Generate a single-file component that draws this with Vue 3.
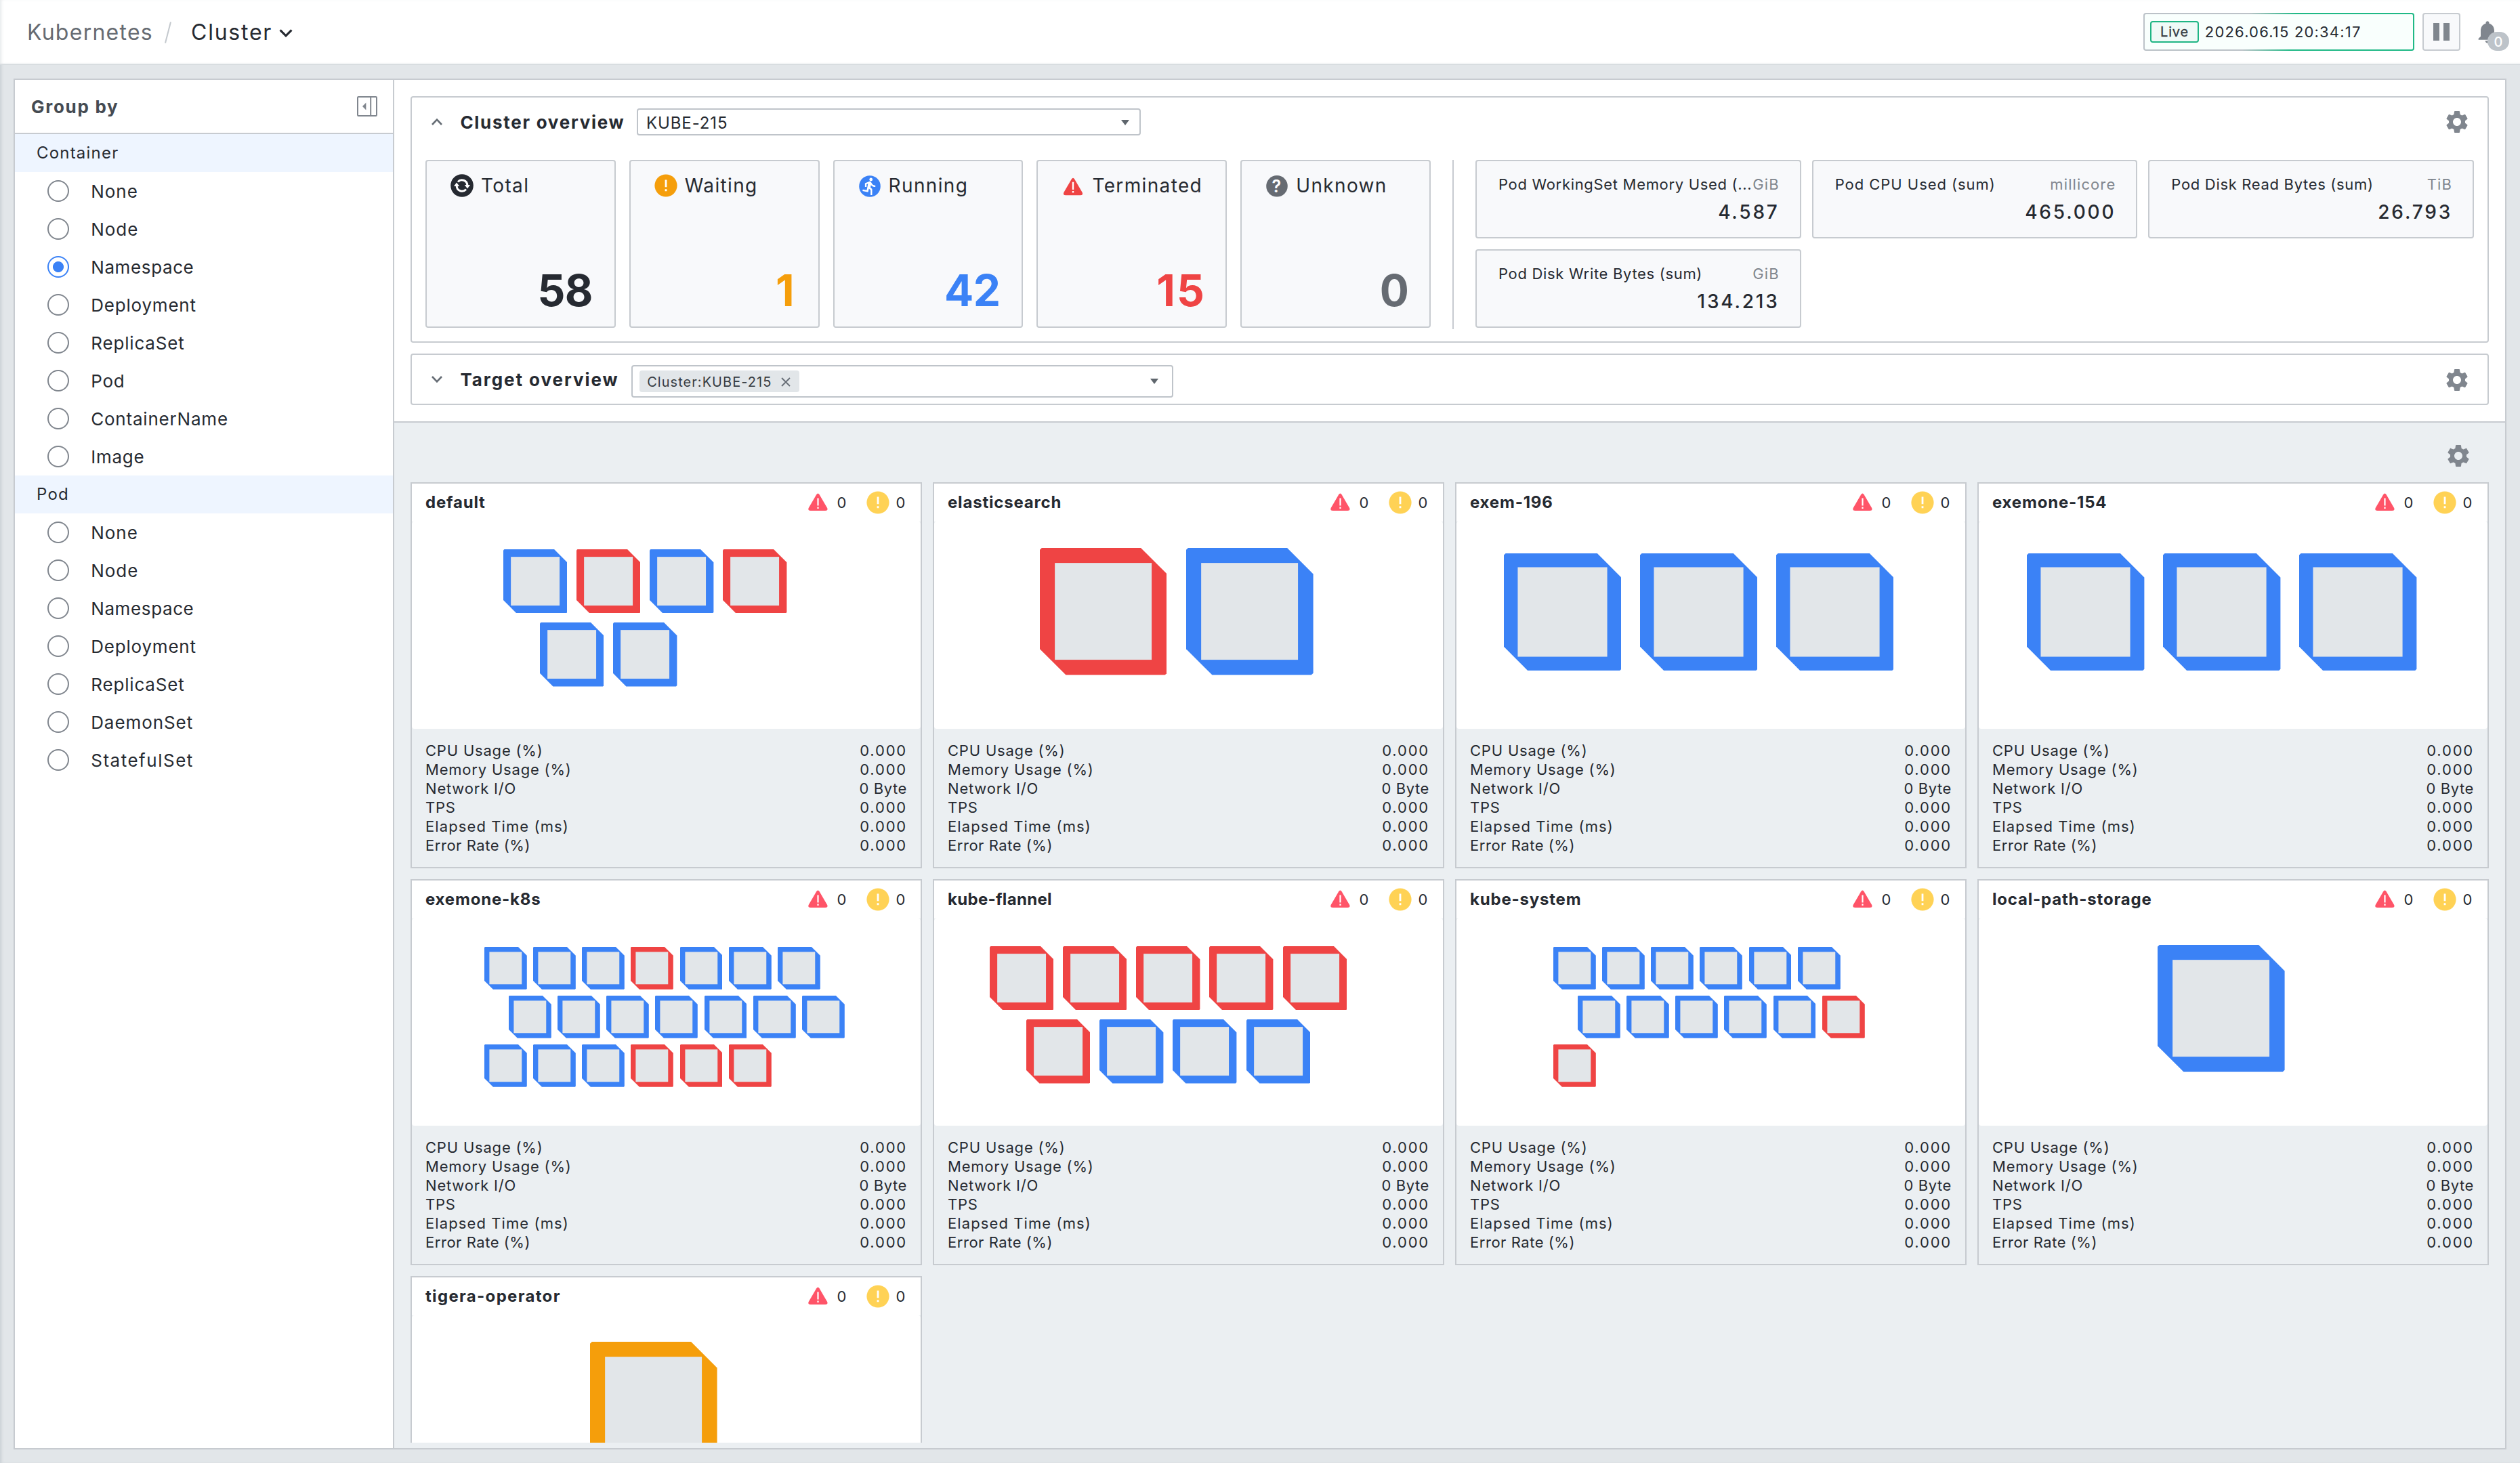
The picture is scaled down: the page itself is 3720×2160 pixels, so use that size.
<script setup>
const groups = [
  { name: 'Container', items: ['None', 'Node', 'Namespace', 'Deployment', 'ReplicaSet', 'Pod', 'ContainerName', 'Image'], selected: 'Namespace' },
  { name: 'Pod', items: ['None', 'Node', 'Namespace', 'Deployment', 'ReplicaSet', 'DaemonSet', 'StatefulSet'], selected: null },
]

// letter spacing in px for labels that differ from their list's default
const tracking = {
  None: 0.5,
  Node: 0.5,
  Namespace: 0.31,
  Deployment: 0.4,
  ReplicaSet: 0.42,
  ContainerName: 0.4,
  DaemonSet: 0.46,
  StatefulSet: 0.76,
  'kube-flannel': 0.15,
  'tigera-operator': 0.66,
  'Pod CPU Used (sum)': 0.48,
  'Elapsed Time (ms)': 0.55,
  'Error Rate (%)': 0.27,
}
const track = (label) => (label in tracking ? { letterSpacing: tracking[label] + 'px' } : null)

const stats = [
  { key: 'total', label: 'Total', value: 58 },
  { key: 'waiting', label: 'Waiting', value: 1 },
  { key: 'running', label: 'Running', value: 42 },
  { key: 'terminated', label: 'Terminated', value: 15 },
  { key: 'unknown', label: 'Unknown', value: 0 },
]

const metrics = [
  { label: 'Pod WorkingSet Memory Used (...', unit: 'GiB', value: '4.587' },
  { label: 'Pod CPU Used (sum)', unit: 'millicore', value: '465.000' },
  { label: 'Pod Disk Read Bytes (sum)', unit: 'TiB', value: '26.793' },
  { label: 'Pod Disk Write Bytes (sum)', unit: 'GiB', value: '134.213' },
]

// rows: one letter per container, r = running, t = terminated, w = waiting
const namespaces = [
  { name: 'default', size: 'm', left: 68.4, rows: ['rtrt', 'rr'] },
  { name: 'elasticsearch', size: 'xl', left: 78.9, rows: ['tr'] },
  { name: 'exem-196', size: 'l', left: 36, rows: ['rrr'] },
  { name: 'exemone-154', size: 'l', left: 36.7, rows: ['rrr'] },
  { name: 'exemone-k8s', size: 's', left: 54.4, rows: ['rrrtrrr', 'rrrrrrr', 'rrrttt'] },
  { name: 'kube-flannel', size: 'm', left: 41.9, rows: ['ttttt', 'trrr'] },
  { name: 'kube-system', size: 's', left: 72.4, rows: ['rrrrrr', 'rrrrrt', 't'] },
  { name: 'local-path-storage', size: 'xl', left: 133.2, rows: ['r'] },
  { name: 'tigera-operator', size: 'xl', left: 132.7, rows: ['w'], collapsed: true },
]

const colors = { r: '#3b82f6', t: '#ef4444', w: '#f59e0b' }

const usage = [
  ['CPU Usage (%)', '0.000'],
  ['Memory Usage (%)', '0.000'],
  ['Network I/O', '0 Byte'],
  ['TPS', '0.000'],
  ['Elapsed Time (ms)', '0.000'],
  ['Error Rate (%)', '0.000'],
]

const gear = 'M19.14 12.94c.04-.3.06-.61.06-.94 0-.32-.02-.64-.07-.94l2.03-1.58c.18-.14.23-.41.12-.61l-1.92-3.32c-.12-.22-.37-.29-.59-.22l-2.39.96c-.5-.38-1.03-.7-1.62-.94l-.36-2.54c-.04-.24-.24-.41-.48-.41h-3.84c-.24 0-.43.17-.47.41l-.36 2.54c-.59.24-1.13.57-1.62.94l-2.39-.96c-.22-.08-.47 0-.59.22L2.74 8.87c-.12.21-.08.47.12.61l2.03 1.58c-.05.3-.09.63-.09.94s.02.64.07.94l-2.03 1.58c-.18.14-.23.41-.12.61l1.92 3.32c.12.22.37.29.59.22l2.39-.96c.5.38 1.03.7 1.62.94l.36 2.54c.05.24.24.41.48.41h3.84c.24 0 .44-.17.47-.41l.36-2.54c.59-.24 1.13-.56 1.62-.94l2.39.96c.22.08.47 0 .59-.22l1.92-3.32c.12-.22.07-.47-.12-.61l-2.01-1.58zM12 15.6c-1.98 0-3.6-1.62-3.6-3.6s1.62-3.6 3.6-3.6 3.6 1.62 3.6 3.6-1.62 3.6-3.6 3.6z'
const triangle = 'M6.1 1.1 Q7.2 -.6 8.3 1.1 L14 10.9 Q14.9 13 12.6 13 H1.8 Q-.5 13 .4 10.9 Z'
</script>

<template>
  <div class="page">
    <header class="topbar">
      <span class="crumb">Kubernetes</span>
      <svg class="slash" width="6" height="16" viewBox="0 0 6 16"><path d="M5 .3 1 15.7" stroke="#c3c8cd" stroke-width="1" fill="none" /></svg>
      <span class="current">Cluster</span>
      <svg class="caret" width="10" height="6" viewBox="0 0 10 6"><path d="M.8.7 5 4.9 9.2.7" stroke="#262a31" stroke-width="1.6" fill="none" /></svg>
      <div class="tools">
        <div class="live"><span class="badge">Live</span><span class="time">2026.06.15 20:34:17</span></div>
        <div class="pause"><i></i><i></i></div>
        <div class="bell">
          <svg width="20" height="20" viewBox="0 0 24 24"><path fill="#80868e" d="M12 22c1.1 0 2-.9 2-2h-4c0 1.1.89 2 2 2zm6-6v-5c0-3.07-1.64-5.64-4.5-6.32V4c0-.83-.67-1.5-1.5-1.5s-1.5.67-1.5 1.5v.68C7.63 5.36 6 7.92 6 11v5l-2 2v1h16v-1l-2-2z" /></svg>
          <span class="count">0</span>
        </div>
      </div>
    </header>

    <div class="main">
      <aside class="sidebar">
        <div class="side-head">
          <span>Group by</span>
          <svg width="15" height="15" viewBox="0 0 15 15"><rect x=".5" y=".5" width="14" height="14" rx=".6" fill="none" stroke="#80868e" /><path d="M10.1 0V15" stroke="#80868e" /><path d="M6.7 4.8V10.2L4 7.5Z" fill="#80868e" /></svg>
        </div>
        <template v-for="g in groups" :key="g.name">
          <div class="group">{{ g.name }}</div>
          <div v-for="i in g.items" :key="i" class="option">
            <span class="radio" :class="{ on: i === g.selected }"></span><span :style="track(i)">{{ i }}</span>
          </div>
        </template>
      </aside>

      <section class="content">
        <div class="overviews">
          <div class="panel">
            <div class="panel-head">
              <svg class="fold" width="8" height="5" viewBox="0 0 8 5"><path d="M.5 4.5 4 .8 7.5 4.5" stroke="#666d75" stroke-width="1.3" fill="none" /></svg>
              <span class="title">Cluster overview</span>
              <div class="select">KUBE-215<svg class="drop" width="6" height="4" viewBox="0 0 6 4"><path d="M0 0H6L3 4Z" fill="#5f666d" /></svg></div>
              <svg class="gear" width="20" height="20" viewBox="0 0 24 24"><path :d="gear" fill="#80868e" /></svg>
            </div>
            <div class="figures">
              <div class="stats">
                <div v-for="s in stats" :key="s.key" class="stat" :class="s.key">
                  <div class="stat-label">
                    <svg width="20" height="20" viewBox="-10 -10 20 20">
                      <template v-if="s.key === 'total'">
                        <circle r="8.4" fill="#262a31" />
                        <path d="M-3.9 .2A3.95 3.95 0 0 0 3 2.8M3.9 -.2A3.95 3.95 0 0 0 -3 -2.8" stroke="#fff" stroke-width="1.5" fill="none" />
                        <path d="M-6 .5H-1.9L-4-2.3ZM6-.5H1.9L4 2.3Z" fill="#fff" />
                      </template>
                      <template v-else-if="s.key === 'waiting'">
                        <circle r="8.3" fill="#f59e0b" />
                        <path d="M-.7-4.3H.7V1.1H-.7ZM-.7 2.6H.7V4.1H-.7Z" fill="#fff" />
                      </template>
                      <template v-else-if="s.key === 'running'">
                        <circle cy=".5" r="7.9" fill="#3b82f6" />
                        <g transform="translate(-7.1 -6.6) scale(.59)"><path fill="#fff" d="M13.49 5.48c1.1 0 2-.9 2-2s-.9-2-2-2-2 .9-2 2 .9 2 2 2zm-3.6 13.9 1-4.4 2.1 2v6h2v-7.5l-2.1-2 .6-3c1.3 1.5 3.3 2.5 5.5 2.5v-2c-1.9 0-3.5-1-4.3-2.4l-1-1.6c-.4-.6-1-1-1.7-1-.3 0-.5.1-.8.1l-5.2 2.2v4.7h2v-3.4l1.8-.7-1.6 8.1-4.9-1-.4 2 7 1.4z" /></g>
                      </template>
                      <template v-else-if="s.key === 'terminated'">
                        <path :d="triangle" fill="#ef4444" transform="translate(-7.2 -5.9)" />
                        <path d="M-.6-2.6H.6V3H-.6ZM-.6 4H.6V5.2H-.6Z" fill="#fff" />
                      </template>
                      <template v-else>
                        <circle cy=".4" r="7.9" fill="#666b72" />
                        <text class="mark" x="0" y="4.9" text-anchor="middle" fill="#fff">?</text>
                      </template>
                    </svg>
                    <span>{{ s.label }}</span>
                  </div>
                  <div class="stat-value">{{ s.value }}</div>
                </div>
              </div>
              <div class="divider"></div>
              <div class="metrics">
                <div v-for="m in metrics" :key="m.label" class="metric">
                  <div class="metric-head"><span :style="track(m.label)">{{ m.label }}</span><span class="unit">{{ m.unit }}</span></div>
                  <div class="metric-value">{{ m.value }}</div>
                </div>
              </div>
            </div>
          </div>

          <div class="panel target">
            <div class="panel-head">
              <svg class="fold" width="8" height="5" viewBox="0 0 8 5"><path d="M.5 .5 4 4.2 7.5 .5" stroke="#666d75" stroke-width="1.3" fill="none" /></svg>
              <span class="title">Target overview</span>
              <div class="select multi">
                <span class="tag">Cluster:KUBE-215<svg width="8" height="8" viewBox="0 0 8 8"><path d="M1 1 7 7M7 1 1 7" stroke="#666d75" stroke-width=".9" /></svg></span>
                <svg class="drop" width="6" height="4" viewBox="0 0 6 4"><path d="M0 0H6L3 4Z" fill="#5f666d" /></svg>
              </div>
              <svg class="gear" width="20" height="20" viewBox="0 0 24 24"><path :d="gear" fill="#80868e" /></svg>
            </div>
          </div>
        </div>

        <div class="board">
          <div class="board-tools"><svg width="20" height="20" viewBox="0 0 24 24"><path :d="gear" fill="#80868e" /></svg></div>
          <div class="cards">
            <div v-for="n in namespaces" :key="n.name" class="card">
              <div class="card-head">
                <span class="card-name" :style="track(n.name)">{{ n.name }}</span>
                <svg class="tri" width="15" height="14" viewBox="0 0 15 14"><path :d="triangle" fill="#ff5468" /><path d="M6.7 3.7H7.8V9.2H6.7ZM6.7 10.3H7.8V11.5H6.7Z" fill="#fff" /></svg>
                <span class="n">0</span>
                <svg class="dot" width="17" height="17" viewBox="-8.5 -8.5 17 17"><circle r="8.3" fill="#ffd255" /><path d="M-.7-4.3H.7V1.1H-.7ZM-.7 2.6H.7V4.1H-.7Z" fill="#fff" /></svg>
                <span class="n">0</span>
              </div>
              <div class="cubes" :class="n.size">
                <div v-for="(row, r) in n.rows" :key="r" class="cube-row" :style="{ paddingLeft: n.left - 1 + 'px' }">
                  <svg v-for="(c, i) in row" :key="i" class="cube" viewBox="0 0 100 100">
                    <path :fill="colors[c]" d="M1.5 0H79.5L100 20.5V98.5L98.5 100H20.5L0 79.5V1.5Z" />
                    <rect x="11.8" y="11.8" width="76.2" height="76.2" fill="#e2e6e9" />
                  </svg>
                </div>
              </div>
              <div v-if="!n.collapsed" class="usage">
                <div v-for="u in usage" :key="u[0]" class="usage-row"><span :style="track(u[0])">{{ u[0] }}</span><span class="amount">{{ u[1] }}</span></div>
              </div>
            </div>
          </div>
        </div>
      </section>
    </div>
  </div>
</template>

<style>
body { margin: 0; overflow: hidden; }
</style>

<style scoped>
* { box-sizing: border-box; }
svg { display: block; flex: none; }
.page { zoom: 2; width: 1860px; height: 1080px; display: flex; flex-direction: column; background: #e2e6e9; color: #262a31; font-family: Inter, "Liberation Sans", sans-serif; box-shadow: inset 2px 0 2px -1px rgba(90, 110, 120, .18); }
.topbar { height: 48px; flex: none; display: flex; align-items: center; background: #fff; border-bottom: 1px solid #d8dde0; padding: 0 7px 0 20px; font-size: 16px; white-space: nowrap; box-shadow: inset 2px 0 2px -1px rgba(90, 110, 120, .15); }
.crumb { color: #666b72; width: 101px; letter-spacing: .63px; }
.current { margin-left: 14px; width: 65px; letter-spacing: .88px; }
.slash { margin-top: 1px; }
.caret { margin-top: 2px; }
.tools { margin-left: auto; display: flex; align-items: center; }
.live { width: 200px; height: 28px; border: 1px solid transparent; border-radius: 2px; background: linear-gradient(#f9fffd, #f9fffd) padding-box, linear-gradient(100deg, #bcc2c8 38%, #20b986 55%) border-box; display: flex; align-items: center; padding-left: 4px; }
.badge { width: 36px; height: 16px; border: 1px solid #1fb584; border-radius: 2px; background: #f0faf7; font-size: 10px; line-height: 14px; text-align: center; letter-spacing: .4px; color: #363c42; -webkit-text-stroke: .15px; }
.time { margin-left: 4.4px; font-size: 11px; letter-spacing: .59px; }
.pause { margin-left: 6px; width: 28px; height: 28px; border: 1px solid #c7cbd0; border-radius: 2px; background: #f8f9fb; display: flex; align-items: center; justify-content: center; gap: 3.4px; }
.pause i { width: 4.3px; height: 12.8px; background: #80868e; }
.bell { position: relative; width: 27px; height: 28px; margin-left: 10px; padding: 4.2px 0 0; }
.count { position: absolute; left: 10px; top: 14px; width: 16px; height: 14px; border-radius: 7px; background: #bdc3c9; color: #fff; font-size: 10px; font-weight: 500; line-height: 15.5px; text-align: center; }

.main { flex: none; margin: 10px 10px 0; height: 1012px; border: 1px solid #c7cbd0; background: #fff; display: flex; }
.sidebar { width: 280px; flex: none; border-right: 1px solid #c7cbd0; }
.side-head { height: 40px; border-bottom: 1px solid #c7cbd0; display: flex; align-items: center; justify-content: space-between; padding: 0 11.5px 0 12px; font-size: 13px; font-weight: 700; letter-spacing: .86px; color: #454b52; }
.group { height: 28px; line-height: 28px; padding-left: 16px; background: #eef5ff; font-size: 12px; letter-spacing: .6px; }
.option { height: 28px; display: flex; align-items: center; padding-left: 24px; font-size: 13px; letter-spacing: .37px; }
.radio { width: 16px; height: 16px; border: 1px solid #80868e; border-radius: 50%; margin-right: 16.1px; flex: none; }
.radio.on { border-color: #3b82f6; background: radial-gradient(circle, #3b82f6 3.8px, #fff 4.2px); }

.content { flex: 1; min-width: 0; display: flex; flex-direction: column; background: #ebeff2; }
.overviews { flex: none; height: 253px; background: #fff; border-bottom: 1px solid #c7cbd0; padding: 12px 12px 0; display: flex; flex-direction: column; gap: 8px; }
.panel { height: 182px; border: 1px solid #c7cbd0; border-radius: 2px; }
.panel.target { height: 38px; }
.panel-head { height: 36px; display: flex; align-items: center; padding: 0 12.7px 0 14.5px; }
.fold { margin-right: 13.2px; }
.title { font-size: 13px; font-weight: 700; letter-spacing: .86px; width: 130.3px; white-space: nowrap; }
.target .title { width: 126.3px; letter-spacing: .97px; }
.target .gear { margin-top: 1px; }
.select { width: 372px; height: 20px; border: 1px solid #bfc4ca; border-radius: 2px; font-size: 12px; letter-spacing: .45px; padding: 1px 7.5px 0 6px; display: flex; align-items: center; justify-content: space-between; }
.select.multi { width: 400px; height: 24px; padding: 0 10px 0 5px; margin-top: 3px; }
.tag { height: 16px; width: 118px; border-radius: 2px; background: #e2e6e9; font-size: 10px; line-height: 16px; letter-spacing: .52px; color: #363c42; display: flex; align-items: center; justify-content: space-between; padding: 1px 6.2px 0 5.6px; white-space: nowrap; }
.gear { margin-left: auto; }
.figures { display: flex; gap: 16px; padding: 10px 10px 0; }
.stats { width: 742px; display: flex; gap: 10px; }
.stat { flex: 1; height: 124px; border: 1px solid #c7cbd0; border-radius: 2px; background: #f8f9fb; padding: 8px 16px 0; display: flex; flex-direction: column; justify-content: space-between; }
.stat-label { display: flex; align-items: center; gap: 4px; font-size: 14px; letter-spacing: .68px; line-height: 20px; white-space: nowrap; }
.stat-value { font-size: 32px; font-weight: 700; line-height: 40px; text-align: right; padding-bottom: 6.5px; letter-spacing: -.3px; }
.waiting .stat-value { color: #f59e0b; padding-right: 1.8px; }
.running .stat-value { color: #3b82f6; }
.terminated .stat-value { color: #ef4444; letter-spacing: 1px; margin-right: -1.3px; }
.unknown .stat-value { color: #666b72; margin-right: -.7px; }
.mark { font-size: 12.5px; font-weight: 600; }
.divider { width: 1px; height: 125px; margin-bottom: -1px; background: #c7cbd0; }
.metrics { flex: 1; display: grid; grid-template-columns: repeat(3, 1fr); grid-auto-rows: 58px; gap: 8px; }
.metric { border: 1px solid #c7cbd0; border-radius: 2px; background: #f8f9fb; padding: 9px 15px 0 16px; min-width: 0; }
.metric-head { display: flex; justify-content: space-between; font-size: 11px; line-height: 16px; letter-spacing: .34px; white-space: nowrap; }
.unit { color: #80868e; letter-spacing: .55px; }
.metric-value { text-align: right; font-size: 14px; font-weight: 500; line-height: 20px; letter-spacing: 1.4px; margin-top: 2.6px; }

.board { flex: 1; min-height: 0; padding: 0 12px 4px; display: flex; flex-direction: column; }
.board-tools { height: 44px; flex: none; display: flex; justify-content: flex-end; padding: 14.6px 12.5px 0 0; }
.cards { flex: 1; min-height: 0; overflow: hidden; display: grid; grid-template-columns: repeat(4, 1fr); grid-auto-rows: 285px; gap: 8px; align-content: start; }
.card { border: 1px solid #c7cbd0; background: #ebeff2; display: flex; flex-direction: column; min-width: 0; }
.card-head { height: 28px; background: #fff; display: flex; align-items: center; padding: 0 10.7px 0 10px; }
.card-name { flex: 1; font-size: 12px; font-weight: 700; letter-spacing: .4px; margin-top: -1px; }
.n { width: 7.5px; font-size: 11px; margin-top: -.5px; }
.tri { margin: 0 6.4px 0 0; }
.dot { margin: 0 5px 0 14px; }
.cubes { height: 153px; background: #fff; border-radius: 2px; display: flex; flex-direction: column; }
.cube-row { display: flex; }
.xl { padding-top: 19.5px; }
.xl .cube-row { gap: 14.5px; }
.xl .cube { width: 93.8px; height: 93.8px; }
.l { padding-top: 23.5px; }
.l .cube-row { gap: 13.8px; }
.l .cube { width: 86.7px; height: 86.7px; }
.m { padding-top: 20.5px; gap: 6.9px; }
.m .cube-row { gap: 6.9px; }
.m .cube { width: 47.2px; height: 47.2px; }
.m .cube-row:nth-child(2) { margin-left: 27.1px; }
.s { padding-top: 21px; gap: 4.7px; }
.s .cube-row { gap: 4.7px; }
.s .cube { width: 31.4px; height: 31.4px; }
.s .cube-row:nth-child(2) { margin-left: 18px; }
.usage { padding: 9px 10px 0 10px; font-size: 11px; letter-spacing: .4px; }
.usage-row { height: 14px; line-height: 14px; display: flex; justify-content: space-between; }
.amount { letter-spacing: .9px; }
.usage-row:nth-child(3) .amount { letter-spacing: .3px; }
</style>
